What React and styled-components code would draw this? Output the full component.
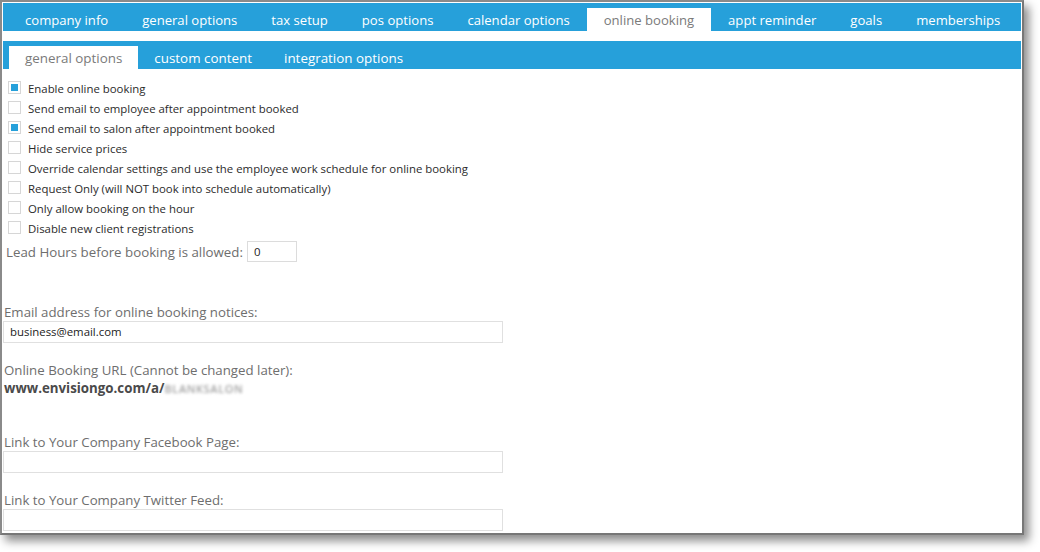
import React from "react";
import styled, { createGlobalStyle } from "styled-components";

const GlobalStyle = createGlobalStyle`
  html, body {
    margin: 0;
    padding: 0;
    background: #ffffff;
  }
  body {
    font-family: "Open Sans", "Noto Sans", sans-serif;
  }
`;

const BLUE = "#26a0da";

const Page = styled.div`
  min-height: 552px;
`;

const Frame = styled.div`
  width: 1018px;
  height: 529px;
  border: 2px solid #8a8a8a;
  border-right-color: #777;
  border-bottom-color: #777;
  background: #fff;
  padding: 1px;
  box-sizing: content-box;
  box-shadow: 5px 6px 9px rgba(0, 0, 0, 0.45);
  overflow: hidden;
`;

const TabBar = styled.div`
  display: flex;
  align-items: flex-end;
  height: 28px;
  background: ${BLUE};
  padding-left: ${(p) => p.$inset}px;
  margin-bottom: ${(p) => p.$gap || 0}px;
  box-sizing: border-box;
`;

const Tab = styled.div`
  height: 23px;
  line-height: 24px;
  padding: 0 ${(p) => p.$pad}px;
  font-size: ${(p) => p.$size}px;
  color: ${(p) => (p.$active ? "#7a7a7a" : "#ffffff")};
  background: ${(p) => (p.$active ? "#ffffff" : "transparent")};
  white-space: nowrap;
  cursor: pointer;
`;

const Options = styled.div`
  padding: 9px 0 0 5px;
  display: flex;
  flex-direction: column;
`;

const OptionRow = styled.label`
  display: flex;
  align-items: center;
  height: 20px;
  font-size: 11.4px;
  color: #2b2b2b;
`;

const Box = styled.span`
  width: 11px;
  height: 11px;
  border: 1px solid #d6d6d6;
  background: #fff;
  margin-right: 7px;
  position: relative;
  flex-shrink: 0;
  top: -1px;

  &::after {
    content: "";
    display: ${(p) => (p.$checked ? "block" : "none")};
    position: absolute;
    left: 2px;
    top: 2px;
    width: 7px;
    height: 7px;
    background: ${BLUE};
  }
`;

const LeadRow = styled.div`
  display: flex;
  align-items: center;
  margin-top: 3px;
  padding-left: 3px;
  font-size: 13.3px;
  color: #6e6e6e;
`;

const SmallInput = styled.div`
  width: 42px;
  height: 19px;
  border: 1px solid #dcdcdc;
  margin-left: 4px;
  padding-left: 6px;
  font-size: 11.4px;
  color: #222;
  line-height: 19px;
`;

const Field = styled.div`
  display: flex;
  flex-direction: column;
  margin-top: ${(p) => p.$top}px;
`;

const Label = styled.div`
  font-size: 13.25px;
  color: #6e6e6e;
  height: 18px;
  line-height: 18px;
  padding-left: 1px;
`;

const TextBox = styled.div`
  width: 492px;
  height: 20px;
  border: 1px solid #e0e0e0;
  font-size: 11.4px;
  color: #222;
  line-height: 20px;
  padding-left: 6px;
  box-sizing: content-box;
`;

const UrlLine = styled.div`
  font-size: 13.3px;
  font-weight: 700;
  color: #4a4a4a;
  padding-left: 1px;
  height: 18px;
  line-height: 18px;
`;

const Blurred = styled.span`
  color: #a0a0a0;
  font-weight: 600;
  font-size: 11px;
  letter-spacing: 0.6px;
  filter: blur(1.4px);
`;

const mainTabs = [
  "company info",
  "general options",
  "tax setup",
  "pos options",
  "calendar options",
  "online booking",
  "appt reminder",
  "goals",
  "memberships",
];

const subTabs = ["general options", "custom content", "integration options"];

const options = [
  { text: "Enable online booking", checked: true },
  { text: "Send email to employee after appointment booked" },
  { text: "Send email to salon after appointment booked", checked: true },
  { text: "Hide service prices" },
  { text: "Override calendar settings and use the employee work schedule for online booking" },
  { text: "Request Only (will NOT book into schedule automatically)" },
  { text: "Only allow booking on the hour" },
  { text: "Disable new client registrations" },
];

export default function App() {
  return (
    <Page>
      <GlobalStyle />
      <Frame>
        <TabBar $inset={5} $gap={10}>
          {mainTabs.map((t) => (
            <Tab key={t} $pad={17} $size={13.1} $active={t === "online booking"}>
              {t}
            </Tab>
          ))}
        </TabBar>
        <TabBar $inset={6}>
          {subTabs.map((t) => (
            <Tab key={t} $pad={16} $size={13.4} $active={t === "general options"}>
              {t}
            </Tab>
          ))}
        </TabBar>

        <Options>
          {options.map((o) => (
            <OptionRow key={o.text}>
              <Box $checked={o.checked} />
              {o.text}
            </OptionRow>
          ))}
        </Options>

        <LeadRow>
          Lead Hours before booking is allowed:
          <SmallInput>0</SmallInput>
        </LeadRow>

        <Field $top={41}>
          <Label>Email address for online booking notices:</Label>
          <TextBox>business@email.com</TextBox>
        </Field>

        <Field $top={18}>
          <Label>Online Booking URL (Cannot be changed later):</Label>
          <UrlLine>
            www.envisiongo.com/a/<Blurred>BLANKSALON</Blurred>
          </UrlLine>
        </Field>

        <Field $top={36}>
          <Label>Link to Your Company Facebook Page:</Label>
          <TextBox />
        </Field>

        <Field $top={18}>
          <Label>Link to Your Company Twitter Feed:</Label>
          <TextBox />
        </Field>
      </Frame>
    </Page>
  );
}
